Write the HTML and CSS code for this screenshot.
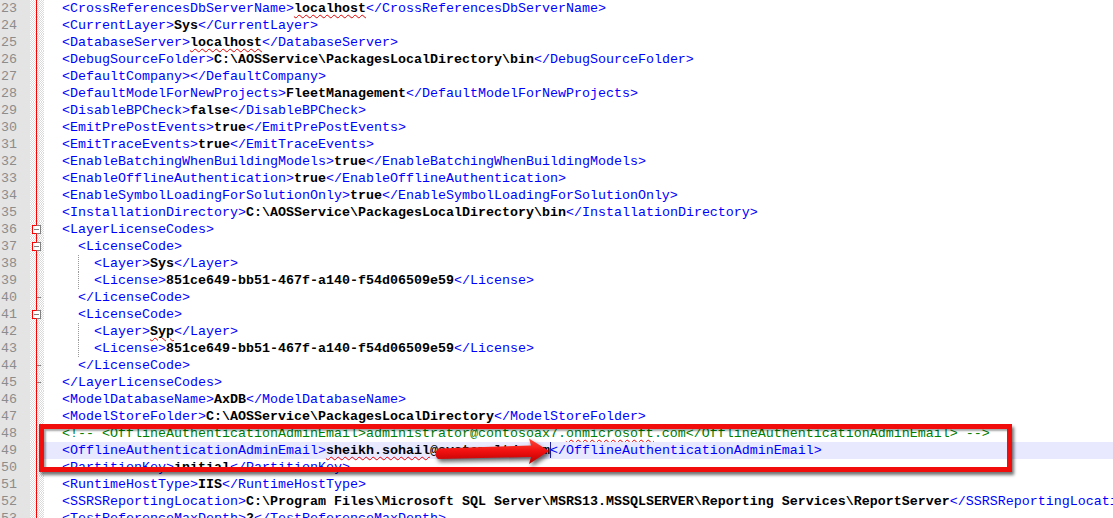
FILE: index.html
```html
<!doctype html>
<html lang="en">

<head>
    <meta charset="utf-8">
    <meta name="viewport" content="width=device-width, initial-scale=1">
    <title>DynamicsDevConfig.xml - Notepad++</title>

    <link rel="stylesheet" href="styles.css">
</head>

<body>
    <div class="editor">
        <div class="line"><span class="ln">23</span><span class="fm"></span><span class="tx">  &lt;CrossReferencesDbServerName&gt;<b class="sp">localhost</b>&lt;/CrossReferencesDbServerName&gt;</span></div>
        <div class="line"><span class="ln">24</span><span class="fm"></span><span class="tx">  &lt;CurrentLayer&gt;<b>Sys</b>&lt;/CurrentLayer&gt;</span></div>
        <div class="line"><span class="ln">25</span><span class="fm"></span><span class="tx">  &lt;DatabaseServer&gt;<b class="sp">localhost</b>&lt;/DatabaseServer&gt;</span></div>
        <div class="line"><span class="ln">26</span><span class="fm"></span><span class="tx">  &lt;DebugSourceFolder&gt;<b>C:\AOSService\PackagesLocalDirectory\bin</b>&lt;/DebugSourceFolder&gt;</span></div>
        <div class="line"><span class="ln">27</span><span class="fm"></span><span class="tx">  &lt;DefaultCompany&gt;&lt;/DefaultCompany&gt;</span></div>
        <div class="line"><span class="ln">28</span><span class="fm"></span><span class="tx">  &lt;DefaultModelForNewProjects&gt;<b>FleetManagement</b>&lt;/DefaultModelForNewProjects&gt;</span></div>
        <div class="line"><span class="ln">29</span><span class="fm"></span><span class="tx">  &lt;DisableBPCheck&gt;<b>false</b>&lt;/DisableBPCheck&gt;</span></div>
        <div class="line"><span class="ln">30</span><span class="fm"></span><span class="tx">  &lt;EmitPrePostEvents&gt;<b>true</b>&lt;/EmitPrePostEvents&gt;</span></div>
        <div class="line"><span class="ln">31</span><span class="fm"></span><span class="tx">  &lt;EmitTraceEvents&gt;<b>true</b>&lt;/EmitTraceEvents&gt;</span></div>
        <div class="line"><span class="ln">32</span><span class="fm"></span><span class="tx">  &lt;EnableBatchingWhenBuildingModels&gt;<b>true</b>&lt;/EnableBatchingWhenBuildingModels&gt;</span></div>
        <div class="line"><span class="ln">33</span><span class="fm"></span><span class="tx">  &lt;EnableOfflineAuthentication&gt;<b>true</b>&lt;/EnableOfflineAuthentication&gt;</span></div>
        <div class="line"><span class="ln">34</span><span class="fm"></span><span class="tx">  &lt;EnableSymbolLoadingForSolutionOnly&gt;<b>true</b>&lt;/EnableSymbolLoadingForSolutionOnly&gt;</span></div>
        <div class="line"><span class="ln">35</span><span class="fm"></span><span class="tx">  &lt;InstallationDirectory&gt;<b>C:\AOSService\PackagesLocalDirectory\bin</b>&lt;/InstallationDirectory&gt;</span></div>
        <div class="line"><span class="ln">36</span><span class="fm"><svg class="fold" viewBox="0 0 14 17"><rect x="2.5" y="4.5" width="8" height="8" fill="#fff" stroke="#808080"/><path d="M2.5 4V13M2 4.5H6.5M2 12.5H6.5" stroke="#f00"/><path d="M4 8.5H9" stroke="#808080"/></svg></span><span class="tx">  &lt;LayerLicenseCodes&gt;</span></div>
        <div class="line"><span class="ln">37</span><span class="fm"><svg class="fold" viewBox="0 0 14 17"><rect x="2.5" y="4.5" width="8" height="8" fill="#fff" stroke="#808080"/><path d="M2.5 4V13M2 4.5H6.5M2 12.5H6.5" stroke="#f00"/><path d="M4 8.5H9" stroke="#808080"/></svg></span><span class="tx">    &lt;LicenseCode&gt;</span></div>
        <div class="line"><span class="ln">38</span><span class="fm"></span><span class="tx">    <span class="ig">  </span>&lt;Layer&gt;<b>Sys</b>&lt;/Layer&gt;</span></div>
        <div class="line"><span class="ln">39</span><span class="fm"></span><span class="tx">    <span class="ig">  </span>&lt;License&gt;<b>851ce649-bb51-467f-a140-f54d06509e59</b>&lt;/License&gt;</span></div>
        <div class="line"><span class="ln">40</span><span class="fm"><svg class="fold" viewBox="0 0 14 17"><path d="M7 8.5H11" stroke="#808080"/></svg></span><span class="tx">    &lt;/LicenseCode&gt;</span></div>
        <div class="line"><span class="ln">41</span><span class="fm"><svg class="fold" viewBox="0 0 14 17"><rect x="2.5" y="4.5" width="8" height="8" fill="#fff" stroke="#808080"/><path d="M2.5 4V13M2 4.5H6.5M2 12.5H6.5" stroke="#f00"/><path d="M4 8.5H9" stroke="#808080"/></svg></span><span class="tx">    &lt;LicenseCode&gt;</span></div>
        <div class="line"><span class="ln">42</span><span class="fm"></span><span class="tx">    <span class="ig">  </span>&lt;Layer&gt;<b class="sp">Syp</b>&lt;/Layer&gt;</span></div>
        <div class="line"><span class="ln">43</span><span class="fm"></span><span class="tx">    <span class="ig">  </span>&lt;License&gt;<b>851ce649-bb51-467f-a140-f54d06509e59</b>&lt;/License&gt;</span></div>
        <div class="line"><span class="ln">44</span><span class="fm"><svg class="fold" viewBox="0 0 14 17"><path d="M7 8.5H11" stroke="#808080"/></svg></span><span class="tx">    &lt;/LicenseCode&gt;</span></div>
        <div class="line"><span class="ln">45</span><span class="fm"><svg class="fold" viewBox="0 0 14 17"><path d="M7 8.5H11" stroke="#808080"/></svg></span><span class="tx">  &lt;/LayerLicenseCodes&gt;</span></div>
        <div class="line"><span class="ln">46</span><span class="fm"></span><span class="tx">  &lt;ModelDatabaseName&gt;<b>AxDB</b>&lt;/ModelDatabaseName&gt;</span></div>
        <div class="line"><span class="ln">47</span><span class="fm"></span><span class="tx">  &lt;ModelStoreFolder&gt;<b>C:\AOSService\PackagesLocalDirectory</b>&lt;/ModelStoreFolder&gt;</span></div>
        <div class="line"><span class="ln">48</span><span class="fm"></span><span class="tx comment">  &lt;!-- &lt;OfflineAuthenticationAdminEmail&gt;administrator@contosoax7.<span class="sp">onmicrosoft</span>.com&lt;/OfflineAuthenticationAdminEmail&gt; --&gt;</span></div>
        <div class="line current"><span class="ln">49</span><span class="fm"></span><span class="tx">  &lt;OfflineAuthenticationAdminEmail&gt;<b><span class="sp">sheikh.sohail</span>@systemsltd.com</b><i class="caret"></i>&lt;/OfflineAuthenticationAdminEmail&gt;</span></div>
        <div class="line"><span class="ln">50</span><span class="fm"></span><span class="tx">  &lt;PartitionKey&gt;<b>initial</b>&lt;/PartitionKey&gt;</span></div>
        <div class="line"><span class="ln">51</span><span class="fm"></span><span class="tx">  &lt;RuntimeHostType&gt;<b>IIS</b>&lt;/RuntimeHostType&gt;</span></div>
        <div class="line"><span class="ln">52</span><span class="fm"></span><span class="tx">  &lt;SSRSReportingLocation&gt;<b>C:\Program Files\Microsoft SQL Server\MSRS13.MSSQLSERVER\Reporting Services\ReportServer</b>&lt;/SSRSReportingLocation&gt;</span></div>
        <div class="line"><span class="ln">53</span><span class="fm"></span><span class="tx">  &lt;TestReferenceMaxDepth&gt;<b>2</b>&lt;/TestReferenceMaxDepth&gt;</span></div>

        <!-- annotation drawn over the editor -->
        <div class="mark"></div>
        <svg class="arrow" viewBox="0 0 126 34">
            <defs>
                <linearGradient id="arrowFill" x1="0" y1="0" x2="0" y2="1">
                    <stop offset="0" stop-color="#ff4a3a"/>
                    <stop offset="0.5" stop-color="#f01010"/>
                    <stop offset="1" stop-color="#b80000"/>
                </linearGradient>
            </defs>
            <path d="M8 12.5L101 9.5L99 2.5L119 15L99 28L101 21L8 23Q3 18 8 12.5Z" fill="url(#arrowFill)"/>
        </svg>
    </div>
</body>

</html>
```

FILE: styles.css
```css
/* Notepad++ style XML view */
body {
    margin: 0;
    background-color: #fff;
}

.editor {
    position: relative;
    width: 1113px;
    height: 518px;
    overflow: hidden;
    font-family: "Liberation Mono", "Courier New", monospace;
    font-size: 13.33px;
}

.line {
    display: grid;
    grid-template-columns: 30px 14px 1fr;
    height: 17px;
    line-height: 17px;
}

.ln {
    background-color: #e4e4e4;
    color: #8c8c8c;
    text-align: right;
    padding-right: 13px;
}

.fm {
    background:
        linear-gradient(to right, transparent 6px, #f00 6px, #f00 7px, transparent 7px),
        repeating-conic-gradient(#dadada 0 25%, #fff 0 50%) 0 0 / 2px 2px;
}

.fold {
    display: block;
    width: 14px;
    height: 17px;
}

.tx {
    min-width: 0;
    padding-left: 2px;
    white-space: pre;
    color: #0000ff;
}

.tx b {
    color: #000;
}

.comment {
    color: #008000;
}

.current .tx {
    background-color: #e8e8ff;
}

.sp {
    text-decoration: underline wavy #e00000;
    text-decoration-thickness: 1px;
    text-underline-offset: 2px;
}

.ig {
    display: inline-block;
    width: 16px;
    height: 17px;
    vertical-align: top;
    background: repeating-linear-gradient(#9a9a9a 0 1px, transparent 1px 2px) 0 0 / 1px 100% no-repeat;
}

.caret {
    display: inline-block;
    width: 0;
    height: 16px;
    margin-right: -1px;
    vertical-align: top;
    border-left: 1px solid #2020a0;
}

.mark {
    position: absolute;
    left: 39px;
    top: 424px;
    width: 963px;
    height: 38px;
    border: 5px solid #f20d0d;
    box-shadow: 2px 3px 3px rgba(0, 0, 0, 0.55), inset 2px 2px 2px rgba(0, 0, 0, 0.35);
}

.arrow {
    position: absolute;
    left: 430px;
    top: 436px;
    width: 126px;
    height: 34px;
    filter: drop-shadow(2px 3px 2px rgba(0, 0, 0, 0.6));
}
```
